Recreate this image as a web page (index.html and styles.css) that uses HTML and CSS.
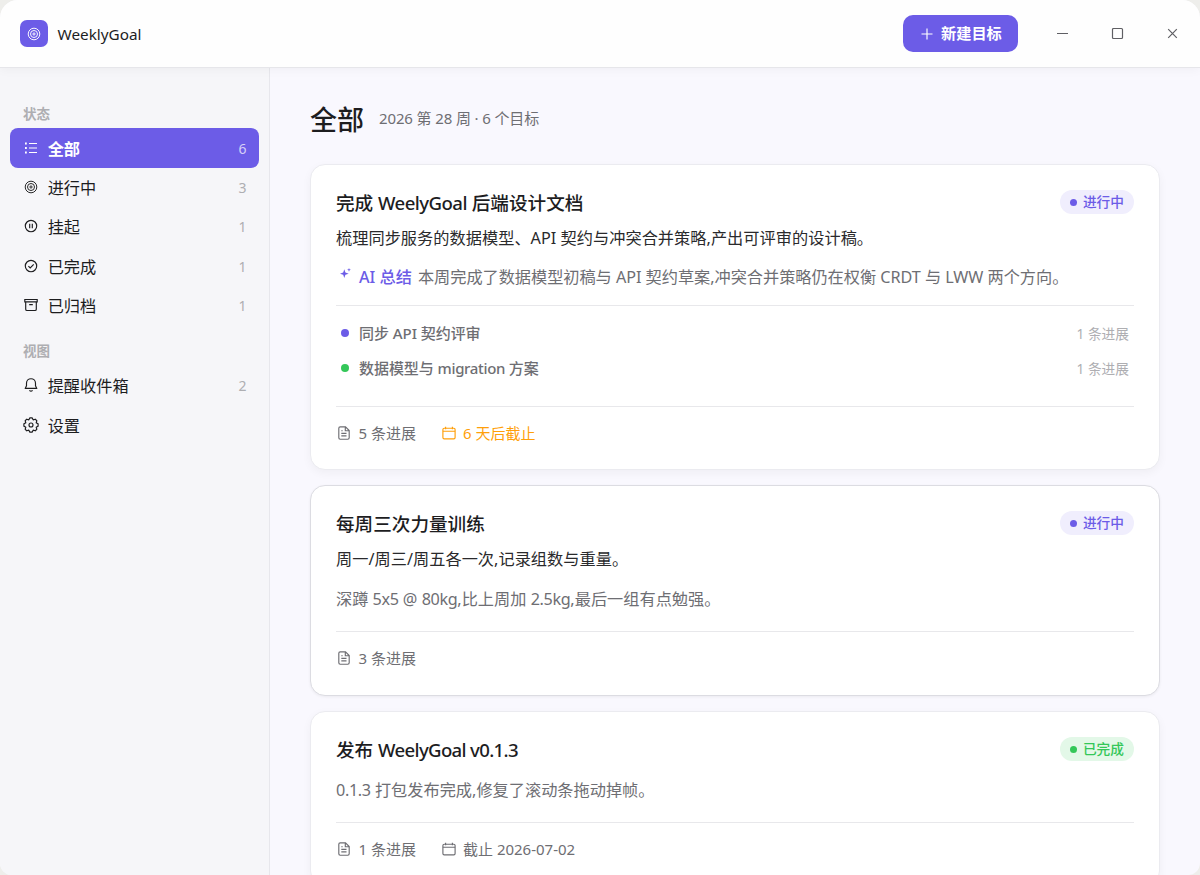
FILE: index.html
```html
<!DOCTYPE html>
<html lang="zh-CN">
<head>
<meta charset="utf-8">
<title>WeeklyGoal</title>
<link rel="stylesheet" href="styles.css">
</head>
<body>
<svg class="sprite" aria-hidden="true">
  <symbol id="target" viewBox="0 0 14 14"><g stroke-width=".95"><circle cx="7" cy="7" r="5.8"/><circle cx="7" cy="7" r="3.5"/><circle cx="7" cy="7" r="1.1"/></g></symbol>
  <symbol id="list" viewBox="0 0 14 14"><path d="M5 2.5h8M5 7h8M5 11.5h8"/><path d="M1 2.5h1.8M1 7h1.8M1 11.5h1.8" stroke-width="1.8"/></symbol>
  <symbol id="pause" viewBox="0 0 14 14"><circle cx="7" cy="7" r="5.7"/><path d="M5.7 4.8v4.4M8.3 4.8v4.4"/></symbol>
  <symbol id="check" viewBox="0 0 14 14"><circle cx="7" cy="7" r="5.7"/><path d="M4.4 7.2l1.8 1.8 3.5-3.7"/></symbol>
  <symbol id="archive" viewBox="0 0 14 14"><path d="M.8 1.5h12.4v2.3H.8zM1.7 3.8v7.4q0 1.3 1.3 1.3h8q1.3 0 1.3-1.3V3.8M5.2 6.6h3.6"/></symbol>
  <symbol id="bell" viewBox="0 0 14 14"><path d="M1.2 10.4h11.6L11.5 7.8V5.2a4.5 4.5 0 0 0-9 0v2.6zM5.4 12.3q1.6 1.5 3.2 0" stroke-linejoin="round"/></symbol>
  <symbol id="gear" viewBox="0 0 16 16"><circle cx="8" cy="8" r="2"/><path stroke-linejoin="round" d="M6.87.89 9.13.89 10.14 2.83 12.23 2.18 13.82 3.77 13.17 5.86 15.11 6.87 15.11 9.13 13.17 10.14 13.82 12.23 12.23 13.82 10.14 13.17 9.13 15.11 6.87 15.11 5.86 13.17 3.77 13.82 2.18 12.23 2.83 10.14.89 9.13.89 6.87 2.83 5.86 2.18 3.77 3.77 2.18 5.86 2.83z"/></symbol>
  <symbol id="doc" viewBox="0 0 14 14"><path d="M8.5.8H3.2Q1.8.8 1.8 2.2v9.6q0 1.4 1.4 1.4h7.6q1.4 0 1.4-1.4V4.5zM8.3.8v3.9h3.9M4.3 4.7h1.4M4.3 7.3h5.2M4.3 9.9h5.2"/></symbol>
  <symbol id="calendar" viewBox="0 0 14 14"><rect x=".9" y="2.2" width="12.2" height="10.6" rx="1.3"/><path d="M.9 5.2h12.2M3.6.8v2.4M10.4.8v2.4"/></symbol>
  <symbol id="sparkle" viewBox="0 0 11 11"><path class="solid" d="M4.3 1.3 5.4 4.6 8.7 5.7 5.4 6.8 4.3 10.1 3.2 6.8 0 5.7 3.2 4.6zM9 0l.5 1.3 1.4.5-1.4.5L9 3.7l-.5-1.4-1.4-.5 1.4-.5z"/></symbol>
</svg>
<div class="window">
  <header class="titlebar">
    <span class="logo"><svg class="icon"><use href="#target"/></svg></span>
    <span class="brand">WeeklyGoal</span>
    <button class="create"><svg class="plus" viewBox="0 0 12 12"><path d="M6 .5v11M.5 6h11"/></svg><span>新建目标</span></button>
    <div class="controls">
      <svg viewBox="0 0 13 13"><path d="M1 6.5h11"/></svg>
      <svg viewBox="0 0 13 13"><rect x="1.5" y="1.5" width="10" height="10" rx="1"/></svg>
      <svg viewBox="0 0 13 13"><path d="M2.2 2.2l8.6 8.6M10.8 2.2l-8.6 8.6"/></svg>
    </div>
  </header>
  <div class="body">
    <nav class="sidebar">
      <h2 class="group">状态</h2>
      <a class="item active"><svg class="icon"><use href="#list"/></svg><span>全部</span><em>6</em></a>
      <a class="item"><svg class="icon"><use href="#target"/></svg><span>进行中</span><em>3</em></a>
      <a class="item"><svg class="icon"><use href="#pause"/></svg><span>挂起</span><em>1</em></a>
      <a class="item"><svg class="icon"><use href="#check"/></svg><span>已完成</span><em>1</em></a>
      <a class="item"><svg class="icon"><use href="#archive"/></svg><span>已归档</span><em>1</em></a>
      <h2 class="group second">视图</h2>
      <a class="item"><svg class="icon"><use href="#bell"/></svg><span>提醒收件箱</span><em>2</em></a>
      <a class="item"><svg class="icon gear"><use href="#gear"/></svg><span>设置</span></a>
    </nav>
    <main class="content">
      <div class="heading"><h1>全部</h1><p>2026 第 28 周 · 6 个目标</p></div>

      <article class="card">
        <div class="card-head"><h3>完成 <span class="latin">WeelyGoal</span> 后端设计文档</h3><span class="badge">进行中</span></div>
        <p class="desc">梳理同步服务的数据模型、API 契约与冲突合并策略,产出可评审的设计稿。</p>
        <p class="note ai"><svg class="sparkle"><use href="#sparkle"/></svg><b>AI 总结</b><span class="ai-text">本周完成了数据模型初稿与 API 契约草案,冲突合并策略仍在权衡 CRDT 与 LWW 两个方向。</span></p>
        <ul class="tasks">
          <li><span class="task">同步 API 契约评审</span><span class="count">1 条进展</span></li>
          <li class="done"><span class="task">数据模型与 <span class="latin">migration</span> 方案</span><span class="count">1 条进展</span></li>
        </ul>
        <footer class="meta"><span><svg class="icon"><use href="#doc"/></svg>5 条进展</span><span class="due"><svg class="icon"><use href="#calendar"/></svg>6 天后截止</span></footer>
      </article>

      <article class="card outlined">
        <div class="card-head"><h3>每周三次力量训练</h3><span class="badge">进行中</span></div>
        <p class="desc">周一/周三/周五各一次,记录组数与重量。</p>
        <p class="note">深蹲 <span class="latin">5x5</span> @ <span class="latin">80kg</span>,比上周加 <span class="latin">2.5kg</span>,最后一组有点勉强。</p>
        <footer class="meta"><span><svg class="icon"><use href="#doc"/></svg>3 条进展</span></footer>
      </article>

      <article class="card compact">
        <div class="card-head"><h3>发布 <span class="latin">WeelyGoal v0.1.3</span></h3><span class="badge success">已完成</span></div>
        <p class="note"><span class="latin">0.1.3</span> 打包发布完成,修复了滚动条拖动掉帧。</p>
        <footer class="meta"><span><svg class="icon"><use href="#doc"/></svg>1 条进展</span><span><svg class="icon"><use href="#calendar"/></svg>截止 2026-07-02</span></footer>
      </article>
    </main>
  </div>
</div>
</body>
</html>
```
FILE: styles.css
```css
* { box-sizing: border-box; margin: 0; padding: 0; }
body {
  background: #eeeeeb;
  color: #1d1d1f;
  font: 16.2px/24px "Noto Sans", "Noto Sans CJK SC", sans-serif;
  white-space: nowrap;
}
svg { display: block; fill: none; stroke: currentColor; stroke-width: 1.15; flex: none; }
.sprite { position: absolute; width: 0; height: 0; }
.solid { fill: currentColor; stroke: none; }
.icon { width: 14px; height: 14px; }
.latin { letter-spacing: -.35px; }

.window {
  height: 875px;
  display: flex;
  flex-direction: column;
  overflow: hidden;
  border-radius: 18px 18px 12px 12px;
  background: #f9f8fe;
}
.titlebar {
  height: 68px;
  flex: none;
  display: flex;
  align-items: center;
  padding: 0 20px;
  background: #fefefe;
  border-bottom: 1px solid #e6e6ea;
  box-shadow: 0 2px 10px rgba(0, 0, 0, .04);
  z-index: 1;
}
.logo {
  width: 28px;
  height: 27px;
  display: grid;
  place-items: center;
  border-radius: 7px;
  background: #6c5ce7;
  color: #fff;
}
.brand { margin-left: 9.5px; font-size: 15.3px; font-weight: 450; }
.create {
  display: flex;
  align-items: center;
  gap: 8px;
  width: 115px;
  height: 37px;
  margin-left: auto;
  padding-left: 18px;
  border: 0;
  border-radius: 10px;
  background: #6c5ce7;
  color: #fff;
  font: bold 15.2px/24px "Noto Sans", "Noto Sans CJK SC", sans-serif;
}
.create span { margin-top: -1px; }
.plus { width: 12px; height: 12px; }
.controls { display: flex; gap: 42px; margin: 0 1px 0 38px; color: #5f5f64; }
.controls svg { width: 13px; height: 13px; stroke-width: 1.2; }

.body { flex: 1; display: flex; min-height: 0; }
.sidebar {
  width: 270px;
  flex: none;
  padding: 36px 10px 0;
  background: #f6f6f9;
  border-right: 1px solid #e7e7ec;
}
.group {
  height: 24px;
  padding-left: 13px;
  color: #aeaeb2;
  font-size: 13.5px;
  line-height: 21px;
}
.group.second { margin-top: 16px; height: 24.5px; }
.item {
  display: flex;
  align-items: center;
  height: 39.5px;
  padding: 0 12.5px 0 14px;
}
.item span { margin-left: 9.7px; padding-top: 2px; }
.item em { margin-left: auto; padding-top: 2px; font-style: normal; font-size: 14px; color: #aeaeb2; }
.item.active { height: 40px; margin-bottom: -1px; background: #6c5ce7; color: #fff; border-radius: 8px; font-weight: 600; }
.item.active em { color: #d6d1f8; font-weight: 400; }
.gear { width: 16px; height: 16px; margin: 0 -1px; }

.content { flex: 1; padding: 32px 40px 0; overflow: hidden; }
.heading { display: flex; align-items: center; height: 40px; margin-bottom: 24px; }
.heading h1 { font-size: 27px; font-weight: 500; line-height: 40px; }
.heading p { margin: -4px 0 0 15px; color: #6e6e73; font-size: 15px; letter-spacing: -.13px; }

.card {
  margin-bottom: 15px;
  padding: 25px;
  background: #fff;
  border: 1px solid #ebebf0;
  border-radius: 15px;
  box-shadow: 0 3px 10px rgba(0, 0, 0, .045);
}
.card.outlined { padding-bottom: 26px; border-color: #dcdce2; box-shadow: 0 1px 3px rgba(0, 0, 0, .06); }
.card-head { display: flex; justify-content: space-between; align-items: flex-start; height: 26px; }
.card-head h3 { font-size: 18.6px; font-weight: 500; line-height: 26px; }
.card-head .latin { letter-spacing: -.55px; }
.compact .card-head .latin { letter-spacing: -.66px; }
.badge {
  display: flex;
  align-items: center;
  gap: 6px;
  height: 24px;
  padding: 0 10px;
  border-radius: 12px;
  background: #f0eefd;
  color: #6c5ce7;
  font-size: 13.7px;
  font-weight: 500;
}
.badge::before { content: ""; width: 7px; height: 7px; border-radius: 50%; background: currentColor; }
.badge.success { background: #e3f8e8; color: #34c759; }
.desc { margin-top: 10px; color: #2a2a2c; letter-spacing: .03px; }
.note { margin-top: 16px; color: #6e6e73; }
.compact .note { margin-top: 15px; }
.ai { display: flex; margin-top: 15px; }
.sparkle { width: 11px; height: 11px; margin: 3px 8px 0 4px; color: #6c5ce7; }
.ai b { font-weight: 500; color: #6c5ce7; }
.ai-text { margin-left: 6px; letter-spacing: -.035px; }
.tasks {
  list-style: none;
  margin-top: 16px;
  padding-top: 9.5px;
  border-top: 1px solid #e8e8eb;
}
.tasks li { display: flex; align-items: center; height: 35px; padding: 0 5px; color: #6e6e73; font-size: 15px; }
.tasks li::before { content: ""; width: 8px; height: 8px; margin: -1px 10px 0 0; border-radius: 50%; background: #6c5ce7; }
.tasks .done::before { background: #34c759; }
.task { margin-top: -1px; font-weight: 500; letter-spacing: -.05px; }
.count { margin: 1px 0 0 auto; color: #aeaeb2; font-size: 13.7px; }
.tasks + .meta { margin-top: 20.5px; }
.meta {
  display: flex;
  gap: 26px;
  margin-top: 20px;
  padding-top: 14px;
  border-top: 1px solid #e8e8eb;
  color: #6e6e73;
  font-size: 15px;
}
.meta span { display: flex; align-items: center; height: 23px; }
.meta .icon { margin: 0 7.5px 0 1px; }
.meta span + span .icon { margin: 0 7px 0 0; }
.meta .due { color: #ff9f0a; }
```
